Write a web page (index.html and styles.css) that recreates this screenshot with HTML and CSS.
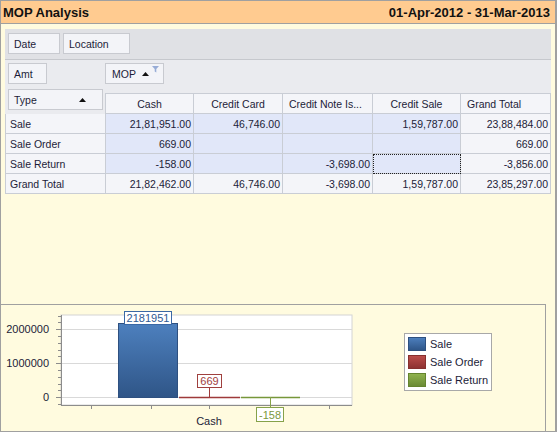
FILE: index.html
```html
<!DOCTYPE html>
<html lang="en">
<head>
  <meta charset="UTF-8">
  <title>MOP Analysis</title>
  <link rel="stylesheet" href="styles.css">
</head>
<body>
  <div id="window">
    <div id="title-bar">
      <span>MOP Analysis</span>
      <span>01-Apr-2012 - 31-Mar-2013</span>
    </div>

    <div id="pivot">
      <div class="filter-area">
        <div class="field-btn btn-date">Date</div>
        <div class="field-btn btn-location">Location</div>
      </div>

      <div class="data-fields">
        <div class="data-holder">
          <div class="field-btn btn-amt">Amt</div>
        </div>
        <div class="field-btn btn-mop">
          MOP
          <svg class="sort-up" width="7" height="4" viewBox="0 0 7 4"><path d="M0 4 L3.5 0 L7 4 Z" fill="#111"/></svg>
          <svg class="funnel" width="7" height="7" viewBox="0 0 7 7"><path d="M0 0 H7 L4.3 3 V6.5 L2.7 5.6 V3 Z" fill="#97acd6"/></svg>
        </div>
      </div>

      <div class="pivot-grid">
        <div class="corner">
          <div class="field-btn btn-type">
            Type
            <svg width="7" height="4" viewBox="0 0 7 4"><path d="M0 4 L3.5 0 L7 4 Z" fill="#111"/></svg>
          </div>
        </div>
        <div class="col-head first">Cash</div>
        <div class="col-head">Credit Card</div>
        <div class="col-head left">Credit Note Is...</div>
        <div class="col-head">Credit Sale</div>
        <div class="col-head left">Grand Total</div>

        <div class="row-head">Sale</div>
        <div class="cell">21,81,951.00</div>
        <div class="cell">46,746.00</div>
        <div class="cell"></div>
        <div class="cell">1,59,787.00</div>
        <div class="cell total">23,88,484.00</div>

        <div class="row-head">Sale Order</div>
        <div class="cell">669.00</div>
        <div class="cell"></div>
        <div class="cell"></div>
        <div class="cell"></div>
        <div class="cell total">669.00</div>

        <div class="row-head">Sale Return</div>
        <div class="cell">-158.00</div>
        <div class="cell"></div>
        <div class="cell">-3,698.00</div>
        <div class="cell focused"></div>
        <div class="cell total">-3,856.00</div>

        <div class="row-head grand">Grand Total</div>
        <div class="cell total">21,82,462.00</div>
        <div class="cell total">46,746.00</div>
        <div class="cell total">-3,698.00</div>
        <div class="cell total">1,59,787.00</div>
        <div class="cell total">23,85,297.00</div>
      </div>
    </div>

    <div id="chart-panel">
      <svg class="chart" width="380" height="126" viewBox="1 305 380 126">
        <defs>
          <linearGradient id="blueBar" x1="0" y1="0" x2="0" y2="1">
            <stop offset="0" stop-color="#4d80be"/>
            <stop offset="1" stop-color="#2f5587"/>
          </linearGradient>
        </defs>
        <rect x="61" y="315" width="291" height="90" fill="#fff" stroke="#d4d4d4"/>
        <g stroke="#d9d9d9">
          <line x1="62" y1="329.5" x2="352" y2="329.5"/>
          <line x1="62" y1="363.5" x2="352" y2="363.5"/>
          <line x1="62" y1="397.5" x2="352" y2="397.5"/>
        </g>
        <g stroke="#8c8c8c">
          <line x1="61.5" y1="315" x2="61.5" y2="406"/>
          <line x1="61" y1="405.5" x2="352" y2="405.5"/>
          <line x1="56" y1="329.5" x2="61" y2="329.5"/>
          <line x1="56" y1="363.5" x2="61" y2="363.5"/>
          <line x1="56" y1="397.5" x2="61" y2="397.5"/>
          <line x1="58" y1="316.5" x2="61" y2="316.5"/>
          <line x1="58" y1="322.5" x2="61" y2="322.5"/>
          <line x1="58" y1="336.5" x2="61" y2="336.5"/>
          <line x1="58" y1="343.5" x2="61" y2="343.5"/>
          <line x1="58" y1="350.5" x2="61" y2="350.5"/>
          <line x1="58" y1="356.5" x2="61" y2="356.5"/>
          <line x1="58" y1="370.5" x2="61" y2="370.5"/>
          <line x1="58" y1="377.5" x2="61" y2="377.5"/>
          <line x1="58" y1="384.5" x2="61" y2="384.5"/>
          <line x1="58" y1="390.5" x2="61" y2="390.5"/>
          <line x1="58" y1="404.5" x2="61" y2="404.5"/>
          <line x1="91.5" y1="405" x2="91.5" y2="409"/>
          <line x1="151.5" y1="405" x2="151.5" y2="409"/>
          <line x1="209.5" y1="405" x2="209.5" y2="409"/>
          <line x1="329.5" y1="405" x2="329.5" y2="409"/>
        </g>
        <g class="axis-text" text-anchor="end">
          <text x="49" y="333">2000000</text>
          <text x="49" y="367">1000000</text>
          <text x="49" y="401">0</text>
        </g>
        <text class="axis-text" x="209" y="425" text-anchor="middle">Cash</text>

        <rect x="118.5" y="323.5" width="59" height="74" fill="url(#blueBar)" stroke="#2e5080"/>
        <rect x="124.5" y="311.5" width="47" height="13" fill="#fff" stroke="#3b69a5"/>
        <text class="bar-label" x="148" y="322" fill="#2f5a92" text-anchor="middle">2181951</text>

        <line x1="179" y1="397.5" x2="240" y2="397.5" stroke="#9e3a3a" stroke-width="1.4"/>
        <line x1="209.5" y1="388" x2="209.5" y2="397" stroke="#9e3a3a"/>
        <rect x="197.5" y="374.5" width="24" height="13" fill="#fff" stroke="#a0403e"/>
        <text class="bar-label" x="209.5" y="385" fill="#a0403e" text-anchor="middle">669</text>

        <line x1="241" y1="397.5" x2="300" y2="397.5" stroke="#77973a" stroke-width="1.4"/>
        <line x1="270.5" y1="397" x2="270.5" y2="407" stroke="#86a24a"/>
        <rect x="256.5" y="407.5" width="27" height="14" fill="#fff" stroke="#86a24a"/>
        <text class="bar-label" x="270" y="418.5" fill="#7a983c" text-anchor="middle">-158</text>
      </svg>

      <div class="legend">
        <div class="legend-item"><span class="swatch sale"></span>Sale</div>
        <div class="legend-item"><span class="swatch order"></span>Sale Order</div>
        <div class="legend-item"><span class="swatch return"></span>Sale Return</div>
      </div>
    </div>
  </div>
</body>
</html>
```

FILE: styles.css
```css
body {
  margin: 0;
  padding: 0;
  font-family: 'Liberation Sans', Arial, sans-serif;
  color: #1c1c38;
}
#window {
  width: 557px;
  height: 432px;
  box-sizing: border-box;
  border: 1px solid #a0a0a0;
  border-right-width: 2px;
  background-color: #fffbdf;
  display: flex;
  flex-direction: column;
  overflow: hidden;
}
#title-bar {
  height: 22px;
  flex-shrink: 0;
  background-color: #ffcb90;
  border-bottom: 1px solid #a0a0a0;
  display: flex;
  justify-content: space-between;
  align-items: center;
  padding: 0 5px 0 2px;
  font-size: 13px;
  font-weight: bold;
  color: #111;
}
#pivot {
  margin: 5px 4px 0 4px;
  background-color: #eaebef;
  font-size: 10.5px;
}
.filter-area {
  height: 31px;
  box-sizing: border-box;
  background-color: #e0e1e5;
  border-bottom: 1px solid #c6c8cd;
  display: flex;
  gap: 3px;
  padding: 4px 0 0 3px;
}
.field-btn {
  height: 21px;
  box-sizing: border-box;
  background-color: #f3f4f8;
  border: 1px solid #c8cad0;
  display: flex;
  align-items: center;
  padding-left: 5px;
  color: #1c1c38;
}
.btn-date { width: 52px; }
.btn-location { width: 67px; }
.data-fields {
  display: flex;
  padding-top: 3px;
}
.data-holder {
  width: 100px;
  padding-left: 3px;
  box-sizing: border-box;
}
.btn-amt { width: 39px; }
.btn-mop {
  width: 59px;
  padding-left: 6px;
  position: relative;
}
.btn-mop .sort-up {
  margin-left: 6px;
}
.btn-mop .funnel {
  position: absolute;
  top: 2px;
  right: 4px;
}
.pivot-grid {
  display: grid;
  grid-template-columns: 101px 88px 89px 90px 88px 90px;
  grid-template-rows: 30px repeat(4, 20px);
}
.corner {
  padding: 5px 0 0 3px;
}
.btn-type {
  width: 95px;
  justify-content: space-between;
  padding-right: 16px;
}
.col-head {
  align-self: end;
  height: 21px;
  box-sizing: border-box;
  background-color: #f4f5f9;
  border-top: 1px solid #c9cdd5;
  border-right: 1px solid #c9cdd5;
  border-bottom: 1px solid #c9cdd5;
  display: flex;
  align-items: center;
  justify-content: center;
}
.col-head.first {
  margin-left: -1px;
  border-left: 1px solid #c9cdd5;
}
.col-head.left {
  justify-content: flex-start;
  padding-left: 6px;
}
.row-head {
  background-color: #f4f5f9;
  border-left: 1px solid #c9cdd5;
  border-right: 1px solid #c9cdd5;
  border-bottom: 1px solid #c9cdd5;
  display: flex;
  align-items: center;
  padding-left: 4px;
}
.cell {
  background-color: #e1e7f9;
  border-right: 1px solid #c9cdd5;
  border-bottom: 1px solid #c9cdd5;
  display: flex;
  align-items: center;
  justify-content: flex-end;
  padding-right: 2px;
}
.cell.total {
  background-color: #f4f5f9;
}
.cell.focused {
  outline: 1px dotted #222;
  outline-offset: -1px;
}
#chart-panel {
  flex: 1;
  margin-top: 110px;
  width: 545px;
  box-sizing: border-box;
  border-top: 1px solid #a0a0a0;
  border-right: 1px solid #a0a0a0;
  display: flex;
  align-items: flex-start;
}
.chart {
  display: block;
  flex-shrink: 0;
}
.axis-text {
  font-size: 11px;
  fill: #1c1c38;
}
.bar-label {
  font-size: 11px;
}
.legend {
  margin: 28px 0 0 23px;
  width: 88px;
  box-sizing: border-box;
  background-color: #fff;
  border: 1px solid #a8a8a8;
  padding: 3px 0 3px 3px;
  display: flex;
  flex-direction: column;
  gap: 4px;
  font-size: 11px;
  white-space: nowrap;
}
.legend-item {
  display: flex;
  align-items: center;
  height: 14px;
}
.swatch {
  width: 18px;
  height: 14px;
  flex-shrink: 0;
  box-sizing: border-box;
  margin-right: 4px;
  border: 1px solid #2e5080;
}
.swatch.sale {
  background: linear-gradient(#4c7ebc, #2f5689);
}
.swatch.order {
  background: linear-gradient(#bb4c4a, #8e3232);
  border-color: #86302f;
}
.swatch.return {
  background: linear-gradient(#8fb24e, #6b8b35);
  border-color: #65842f;
}
```
